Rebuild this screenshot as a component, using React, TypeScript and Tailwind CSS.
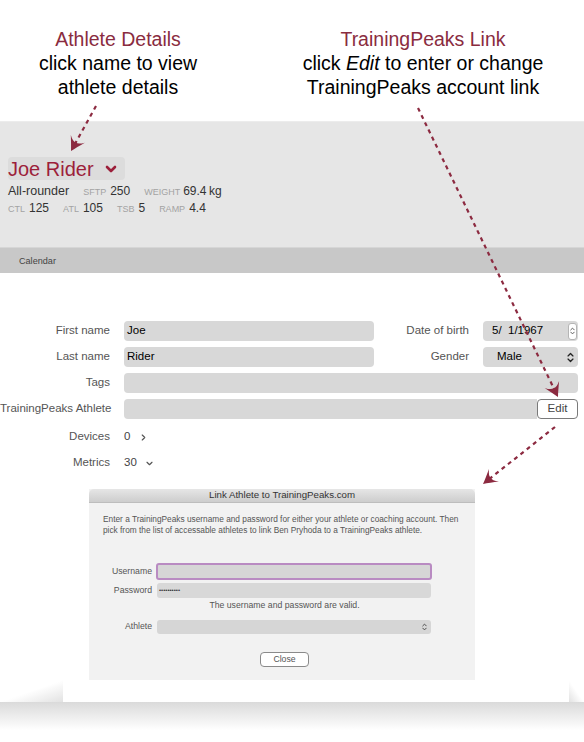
import React from "react";

const maroon = "#8c2a40";

// little up/down chevron pair used by mac style popups
function UpDown({ className = "" }: { className?: string }) {
  return (
    <svg viewBox="0 0 8 12" className={className} fill="none" stroke="currentColor" strokeWidth="1.5" strokeLinecap="round" strokeLinejoin="round">
      <path d="M1.2 4.2 L4 1.4 L6.8 4.2" />
      <path d="M1.2 7.8 L4 10.6 L6.8 7.8" />
    </svg>
  );
}

function Stat({ label, value, first }: { label: string; value: string; first?: boolean }) {
  return (
    <span className={first ? "" : "ml-[14px]"}>
      <span className="text-[9px] text-[#a3a3a3]">{label}</span>
      <span className="ml-1 text-[12px] text-[#333]">{value}</span>
    </span>
  );
}

function Field({ value = "" }: { value?: string }) {
  return (
    <div className="h-5 flex-1 rounded-[4px] bg-[#d8d8d8] pl-[3px] flex items-center text-[11.5px] text-black">
      {value}
    </div>
  );
}

function Label({ text }: { text: string }) {
  return <div className="w-[110px] shrink-0 text-right whitespace-nowrap text-[11.5px] text-[#555]">{text}</div>;
}

// dashed annotation arrow with a swept arrowhead at the end point
function Arrow({ x1, y1, x2, y2 }: { x1: number; y1: number; x2: number; y2: number }) {
  const a = (Math.atan2(y2 - y1, x2 - x1) * 180) / Math.PI;
  const len = Math.hypot(x2 - x1, y2 - y1);
  const ex = x1 + ((x2 - x1) * (len - 9)) / len;
  const ey = y1 + ((y2 - y1) * (len - 9)) / len;
  return (
    <g>
      <line x1={x1} y1={y1} x2={ex} y2={ey} stroke={maroon} strokeWidth="2.2" strokeDasharray="4 4" />
      <path
        transform={`translate(${x2} ${y2}) rotate(${a})`}
        d="M0 0 C-4 -2 -9 -5 -14 -8 Q-9 -3 -10 0 Q-9 3 -14 8 C-9 5 -4 2 0 0 Z"
        fill={maroon}
      />
    </g>
  );
}

export default function App() {
  return (
    <div className="relative w-[584px] min-h-[742px] bg-white font-['Liberation_Sans',Arial,sans-serif] overflow-hidden">
      {/* captions */}
      <div className="h-[121px] pt-[27px] flex text-[19.5px] leading-6 text-black">
        <div className="w-[236px] text-center">
          <div className="text-[#8a2c40]">Athlete Details</div>
          <div>click name to view</div>
          <div>athlete details</div>
        </div>
        <div className="ml-[37px] w-[300px] text-center">
          <div className="text-[#8a2c40]">TrainingPeaks Link</div>
          <div>
            click <i>Edit</i> to enter or change
          </div>
          <div>TrainingPeaks account link</div>
        </div>
      </div>

      {/* athlete header */}
      <div className="h-[126px] bg-[#e6e6e6] border-t border-[#ececec] pt-[35px] pl-2">
        <div className="inline-flex items-center h-[23px] rounded-[4px] bg-[#dcdcdc] pr-2 text-[20px] text-[#9c1f3a]">
          <span>Joe Rider</span>
          <svg viewBox="0 0 12 8" className="ml-[11px] w-3 h-2" fill="none" stroke="#9c1f3a" strokeWidth="2.6" strokeLinecap="round" strokeLinejoin="round">
            <path d="M2 2 L6 6 L10 2" />
          </svg>
        </div>
        <div className="-mt-[1px] h-[17px] leading-[15px] whitespace-nowrap">
          <span className="text-[12.5px] text-[#333]">All-rounder</span>
          <Stat label="SFTP" value="250" />
          <span className="ml-[14px]">
            <span className="text-[9px] text-[#a3a3a3]">WEIGHT</span>
            <span className="ml-[3px] text-[12px] text-[#333]">69.4&thinsp;kg</span>
          </span>
        </div>
        <div className="h-[18px] leading-[15px] whitespace-nowrap">
          <Stat first label="CTL" value="125" />
          <Stat label="ATL" value="105" />
          <Stat label="TSB" value="5" />
          <Stat label="RAMP" value="4.4" />
        </div>
      </div>

      {/* tab bar */}
      <div className="h-[26px] bg-[#c8c8c8] border-t border-[#d6d6d6] flex items-center pl-[19px] pt-[2px] text-[9.1px] text-[#444]">
        Calendar
      </div>

      {/* athlete form */}
      <div className="pt-[48px] pr-[6px] flex flex-col gap-[6px]">
        <div className="flex items-center">
          <Label text="First name" />
          <div className="ml-[14px] w-[250px] flex">
            <Field value="Joe" />
          </div>
          <div className="flex-1 text-right text-[11.5px] text-[#555]">Date of birth</div>
          <div className="ml-[14px] w-[95px] h-5 rounded-[4px] bg-[#d8d8d8] flex items-center pl-[9px] pr-[1px] text-[11.5px] text-black">
            <span className="flex-1 whitespace-pre">5/  1/1967</span>
            <span className="w-[9px] h-[17px] rounded-[3px] bg-white border border-[#b5b5b5] flex items-center justify-center text-[#555]">
              <UpDown className="w-[5px] h-[10px]" />
            </span>
          </div>
        </div>
        <div className="flex items-center">
          <Label text="Last name" />
          <div className="ml-[14px] w-[250px] flex">
            <Field value="Rider" />
          </div>
          <div className="flex-1 text-right text-[11.5px] text-[#555]">Gender</div>
          <div className="ml-[14px] w-[95px] h-5 rounded-[4px] bg-[#d8d8d8] flex items-center pl-[14px] pr-[4px] text-[11.5px] text-black">
            <span className="flex-1">Male</span>
            <UpDown className="w-[7px] h-[11px] text-[#222]" />
          </div>
        </div>
        <div className="flex items-center">
          <Label text="Tags" />
          <div className="ml-[14px] flex-1 flex">
            <Field />
          </div>
        </div>
        <div className="flex items-center">
          <Label text="TrainingPeaks Athlete" />
          <div className="ml-[14px] flex-1 flex">
            <div className="h-5 flex-1 rounded-l-[4px] bg-[#d8d8d8]" />
            <div className="w-[41px] h-5 rounded-[4px] bg-white border border-[#7a7a7a] flex items-center justify-center text-[11.5px] text-[#444]">
              Edit
            </div>
          </div>
        </div>
        <div className="flex items-center h-5 mt-[2px]">
          <Label text="Devices" />
          <span className="ml-[14px] text-[11.5px] text-[#444]">0</span>
          <svg viewBox="0 0 6 8" className="ml-[11px] w-[5px] h-[7px]" fill="none" stroke="#555" strokeWidth="1.4" strokeLinecap="round" strokeLinejoin="round">
            <path d="M1.5 1 L4.5 4 L1.5 7" />
          </svg>
        </div>
        <div className="flex items-center h-5">
          <Label text="Metrics" />
          <span className="ml-[14px] text-[11.5px] text-[#444]">30</span>
          <svg viewBox="0 0 8 6" className="ml-[9px] w-[7px] h-[5px]" fill="none" stroke="#555" strokeWidth="1.4" strokeLinecap="round" strokeLinejoin="round">
            <path d="M1 1.5 L4 4.5 L7 1.5" />
          </svg>
        </div>
      </div>

      {/* link dialog */}
      <div className="ml-[89px] mt-[16px] w-[386px] bg-[#f2f2f2]">
        <div className="h-[14px] rounded-t-[5px] bg-gradient-to-b from-[#e6e6e6] to-[#cdcdcd] border-b border-[#bdbdbd] flex items-center justify-center text-[9.7px] text-[#333]">
          Link Athlete to TrainingPeaks.com
        </div>
        <div className="px-[14px] pt-[11px] pb-[13px] text-[8.7px] text-[#555]">
          <p className="leading-[11px] text-[8.3px]">
            Enter a TrainingPeaks username and password for either your athlete or coaching account. Then pick from the list of accessable athletes to link Ben Pryhoda to a TrainingPeaks athlete.
          </p>
          <div className="mt-[27px] flex items-center">
            <div className="w-[49px] text-right">Username</div>
            <div className="ml-[4px] w-[276px] h-[17px] rounded-[3px] border-2 border-[#b98bc2] bg-[#d6d6d6]" />
          </div>
          <div className="mt-[3px] flex items-center">
            <div className="w-[49px] text-right">Password</div>
            <div className="ml-[5px] w-[274px] h-[15px] rounded-[3px] bg-[#d8d8d8] flex items-center pl-[2px] text-[6px] text-[#333]">
              ••••••••••
            </div>
          </div>
          <div className="mt-[2px] h-[10px] leading-[10px] text-center pl-[5px]">The username and password are valid.</div>
          <div className="mt-[10px] flex items-center">
            <div className="w-[49px] text-right">Athlete</div>
            <div className="ml-[5px] w-[274px] h-[14px] rounded-[3px] bg-[#d6d6d6] flex items-center justify-end pr-[4px] text-[#444]">
              <UpDown className="w-[5px] h-[8px]" />
            </div>
          </div>
          <div className="mt-[18px] flex justify-center pl-[5px]">
            <div className="w-[49px] h-[15px] rounded-[4px] bg-white border border-[#8a8a8a] flex items-center justify-center text-[8.7px] text-[#555]">
              Close
            </div>
          </div>
        </div>
      </div>

      {/* window bottom edge and its shadow */}
      <div className="flex h-[22px]">
        <div className="w-[63px] bg-gradient-to-br from-white via-white to-[#e2e2e2]" />
        <div className="flex-1 bg-white" />
        <div className="w-[15px] bg-gradient-to-bl from-white via-white to-[#e2e2e2]" />
      </div>
      <div className="h-[28px] bg-gradient-to-b from-[#dadada] to-white" />

      {/* annotation arrows */}
      <svg className="absolute inset-0 pointer-events-none" width="584" height="742">
        <Arrow x1={96} y1={106} x2={71} y2={151} />
        <Arrow x1={418} y1={108} x2={558} y2={397} />
        <Arrow x1={555} y1={427} x2={483} y2={484} />
      </svg>
    </div>
  );
}
